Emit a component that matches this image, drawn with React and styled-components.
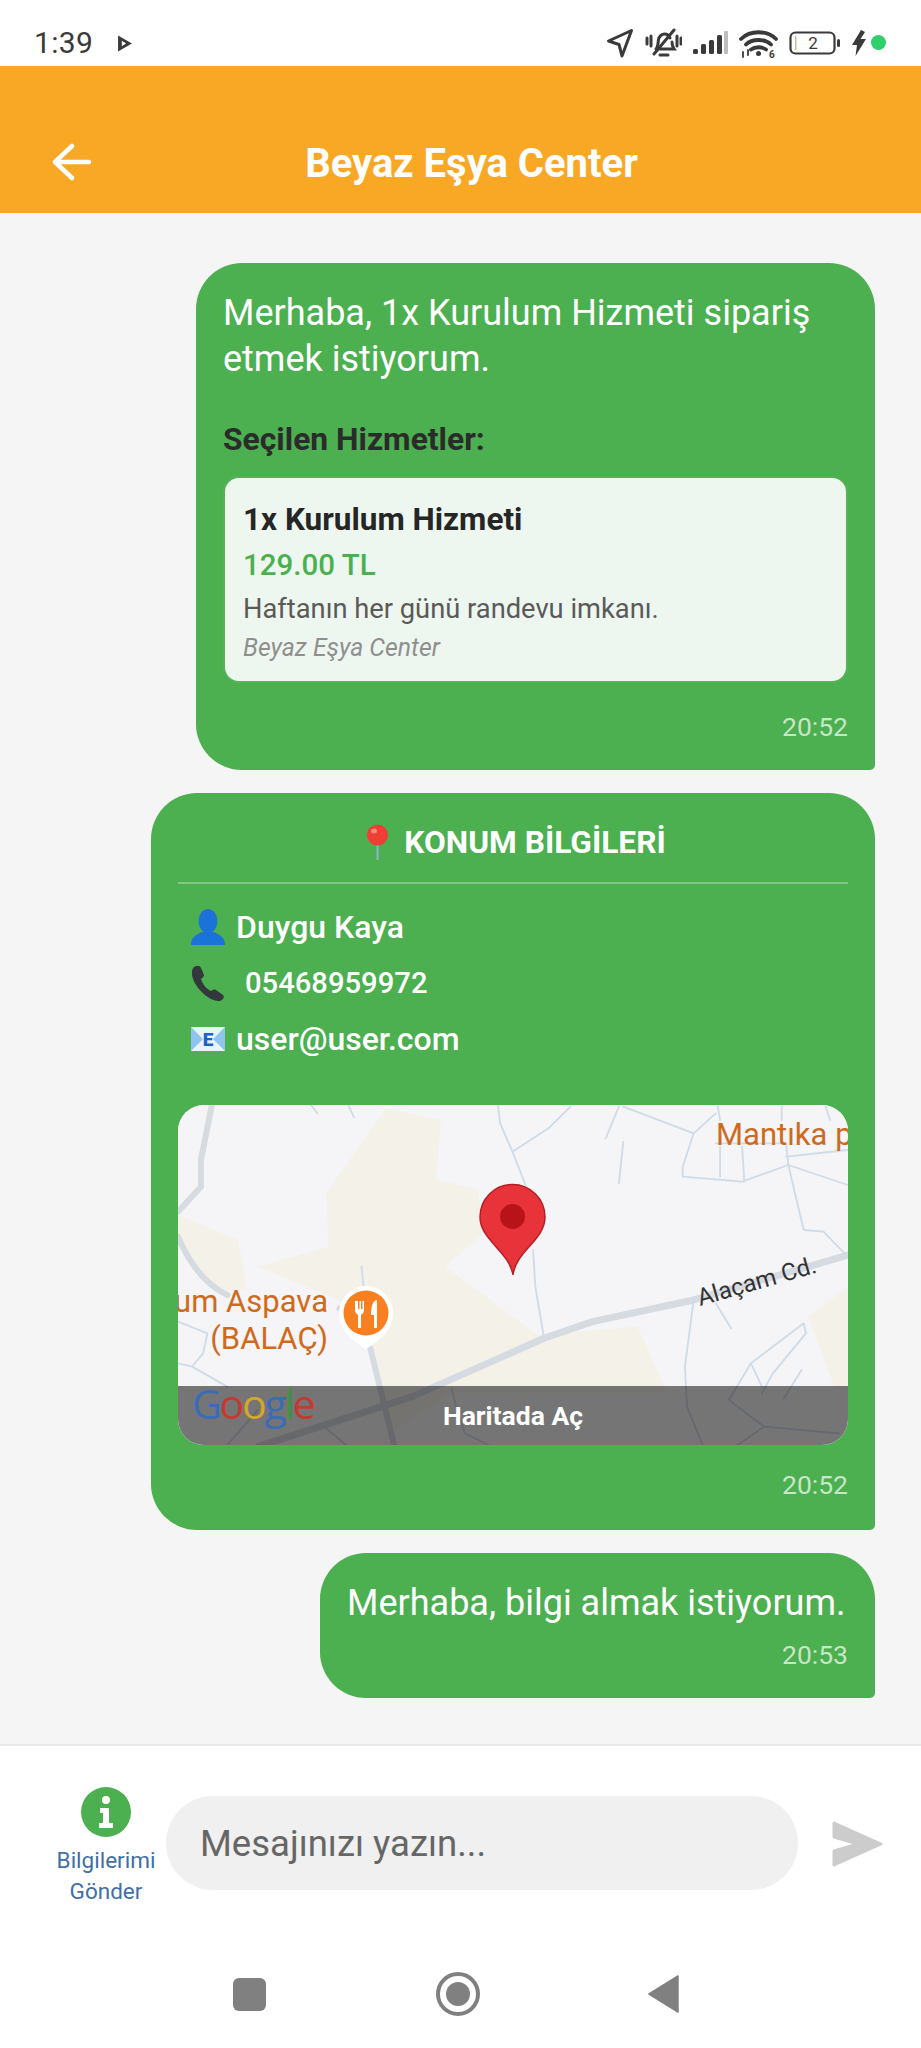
import React from 'react';
import styled, { createGlobalStyle } from 'styled-components';

const Global = createGlobalStyle`
  html, body { margin: 0; padding: 0; background: #fff; }
  * { box-sizing: border-box; }
  body { font-family: Roboto, "Noto Sans", sans-serif; }
`;

const Page = styled.div`
  width: 921px; height: 2048px; display: flex; flex-direction: column; overflow: hidden; background: #fff;
`;
const StatusBar = styled.div`
  height: 66px; flex: none; display: flex; align-items: center; padding: 0 35px 0 34px; background: #fff; color: #333;
`;
const Clock = styled.span`
  font-size: 30px; letter-spacing: 0.3px; color: #3a3a3a; margin-right: 24px; padding-top: 20px; line-height: 46px;
`;
const StatusIcons = styled.div`
  margin-left: auto; display: flex; align-items: center; gap: 11px; padding-top: 19px;
`;
const PlayGlyph = styled.svg`
  margin-top: 20px;
`;
const Header = styled.header`
  height: 147px; flex: none; background: #f9a825; position: relative; display: flex; align-items: center; justify-content: center; padding-top: 48px;
`;
const BackButton = styled.svg`
  position: absolute; left: 52px; top: 77px;
`;
const Title = styled.h1`
  margin: 0 0 0 22px; color: #fff; font-size: 40px; font-weight: 700; line-height: 48px;
`;
const Chat = styled.main`
  flex: 1; min-height: 0; background: #f5f5f5; display: flex; flex-direction: column; align-items: flex-end; gap: 23px; padding: 50px 46px 0 0;
`;
const Bubble = styled.article`
  background: #4caf50; color: #fff; border-radius: 46px 46px 5px 46px; padding: 27px 27px ${p => p.$pb || 27}px;
  width: ${p => p.$w}px;
`;
const MessageText = styled.p`
  margin: 0; font-size: 36px; line-height: 46px;
`;
const SectionLabel = styled.div`
  margin-top: 37px; color: #2b2b2b; font-size: 31.800px; font-weight: 700; line-height: 40px;
`;
const ServiceCard = styled.div`
  margin-top: 17px; height: 207px; background: #eef7ef; border: 2px solid #55b259; border-radius: 16px; padding: 22px 18px 0;
`;
const ServiceName = styled.div`
  color: #262626; font-size: 31.500px; font-weight: 700; line-height: 40px;
`;
const ServicePrice = styled.div`
  margin-top: 5px; color: #4caf50; font-size: 29.500px; font-weight: 500; line-height: 40px;
`;
const ServiceDesc = styled.div`
  margin-top: 4px; color: #5a5a5a; font-size: 27.300px; line-height: 40px;
`;
const ServiceVendor = styled.div`
  margin-top: 1px; color: #8f8f8f; font-size: 24.800px; font-style: italic; line-height: 36px;
`;
const Time = styled.time`
  display: block; text-align: right; color: rgba(255,255,255,.7); font-size: 26.500px; line-height: 32px; margin-top: ${p => p.$mt || 0}px;
`;
const LocationHead = styled.div`
  display: flex; align-items: center; justify-content: center; gap: 15px; height: 68px; margin-top: -4px; padding: 0 0 14px 6px;
  border-bottom: 2px solid rgba(255,255,255,.3); font-size: 31.700px; font-weight: 700;
`;
const InfoRows = styled.div`
  display: flex; flex-direction: column; gap: 14px; padding: 22px 0 0 13px;
`;
const InfoRow = styled.div`
  display: flex; align-items: center; height: 42px; font-size: ${p => p.$size || 32}px; font-weight: 500; gap: ${p => p.$gap || 11}px;
`;
const MapCard = styled.div`
  position: relative; margin-top: 45px; height: 340px; border-radius: 26px; overflow: hidden; background: #f5f4f6;
`;
const MapArt = styled.svg`
  display: block;
`;
const MapOverlay = styled.div`
  position: absolute; left: 0; right: 0; bottom: 0; height: 59px; background: rgba(0,0,0,.52); color: #fff;
  display: flex; align-items: center; justify-content: center; font-size: 26.500px; font-weight: 700;
`;
const GoogleMark = styled.span`
  position: absolute; left: 14px; bottom: 19px; font-family: "Open Sans", sans-serif; font-size: 41px; line-height: 46px; letter-spacing: -2.200px;
`;
const GoogleLetter = styled.span`
  color: ${p => p.$c};
`;
const Composer = styled.div`
  flex: none; height: 206px; border-top: 2px solid #e8e8e8; background: #fff; display: flex; align-items: flex-start; padding-top: 41px;
`;
const SideCol = styled.div`
  width: 166px; flex: none; display: flex; flex-direction: column; align-items: center; padding-left: 46px;
`;
const InfoDot = styled.svg`
  flex: none;
`;
const SendInfoLabel = styled.div`
  margin-top: 8px; text-align: center; color: #3f6fa8; font-size: 22.500px; line-height: 31px; white-space: nowrap;
`;
const MessageInput = styled.div`
  flex: none; width: 632px; height: 94px; margin-top: 9px; border-radius: 47px; background: #f0f0f0; color: #666; font-size: 36.500px; display: flex; align-items: center; padding: 0 0 0 34px;
`;
const SendIcon = styled.svg`
  margin: 34px 0 0 34px; flex: none;
`;
const NavBar = styled.nav`
  flex: none; height: 98px; display: flex; align-items: center; padding: 0 0 10px 233px; background: #fff;
`;
const NavSquare = styled.div`
  width: 33px; height: 33px; border-radius: 6px; background: #808080;
`;
const NavHome = styled.svg`
  margin-left: 170px;
`;
const NavBack = styled.svg`
  margin-left: 168px;
`;

const Arrow = () => (
  <svg width="28" height="30" viewBox="0 0 28 30"><path d="M25.500 2.500 2.500 13 13 16.500 16 28z" fill="none" stroke="#3a3a3a" strokeWidth="3" strokeLinejoin="round" /></svg>
);
const MutedBell = () => (
  <svg width="37" height="30" viewBox="0 0 37 30" fill="none" stroke="#3a3a3a" strokeWidth="3" strokeLinecap="round">
    <path d="M11 21c2-2 2-5 2.400-9 .5-4 4-6 6-6 3 0 5 2 5.600 4M27 14c0 4 .5 5 2 7H15" />
    <path d="M29 2 9 26M15 27h8M2 10v6M6 8v10M32 8v10M36 10v6" />
  </svg>
);
const Signal = () => (
  <svg width="35" height="24" viewBox="0 0 35 24">
    <rect x="0" y="18" width="5" height="5" rx="1.500" fill="#3a3a3a" />
    <rect x="8" y="13" width="5" height="10" rx="1.500" fill="#3a3a3a" />
    <rect x="16" y="9" width="5" height="14" rx="1.500" fill="#3a3a3a" />
    <rect x="24" y="4" width="5" height="19" rx="1.500" fill="#3a3a3a" />
    <rect x="31" y="0" width="4" height="23" rx="1" fill="#bdbdbd" />
  </svg>
);
const Wifi = () => (
  <svg width="39" height="30" viewBox="0 0 39 30" fill="none" stroke="#3a3a3a" strokeWidth="3.800" strokeLinecap="round">
    <path d="M2 11c9-9 26-9 35 0M7 16.500c6-6 19-6 25 0M12 21.500c4-3 11-3 15 0" />
    <circle cx="19.500" cy="25.500" r="2.500" fill="#3a3a3a" stroke="none" />
    <path d="M4 24v5M9 22v5" strokeWidth="1.800" />
    <text x="30" y="30" fontFamily="Roboto" fontSize="10" fontWeight="700" fill="#3a3a3a" stroke="none">6</text>
  </svg>
);
const Battery = () => (
  <svg width="52" height="24" viewBox="0 0 52 24">
    <rect x="1.500" y="1.500" width="44" height="21" rx="5" fill="none" stroke="#3a3a3a" strokeWidth="2.200" />
    <rect x="6" y="5" width="1.500" height="14" fill="#a8d28a" />
    <rect x="48" y="8" width="3" height="8" rx="1.500" fill="#3a3a3a" />
    <text x="24" y="18" textAnchor="middle" fontFamily="Roboto" fontSize="17" fill="#3a3a3a">2</text>
  </svg>
);
const Bolt = () => (
  <svg width="14" height="26" viewBox="0 0 14 26"><path d="M9 0 0 15h5l-1.500 11L14 9H8.500L13 2z" fill="#3a3a3a" /></svg>
);
const GreenDot = () => (
  <svg width="15" height="15" viewBox="0 0 15 15" style={{ marginLeft: -6 }}><circle cx="7.500" cy="7.500" r="7.500" fill="#2fcf6b" /></svg>
);
const PinEmoji = () => (
  <svg width="23" height="36" viewBox="0 0 23 36">
    <rect x="10.500" y="18" width="2" height="18" fill="#8db4c4" />
    <circle cx="11.500" cy="11" r="10.500" fill="#ef3e36" />
    <ellipse cx="8" cy="7" rx="3" ry="2.500" fill="#ff8a80" />
  </svg>
);
const PersonEmoji = () => (
  <svg width="34" height="36" viewBox="0 0 34 36">
    <ellipse cx="17" cy="12" rx="9.500" ry="12" fill="#1b72d8" />
    <path d="M0 36c0-8 5-10 11-13h12c6 3 11 5 11 13z" fill="#1b72d8" />
  </svg>
);
const PhoneEmoji = () => (
  <svg width="36" height="36" viewBox="0 0 36 36">
    <path d="M2 3c3-3 7-3 8 0l3 7c0 2-2 3-3 4 1 4 5 10 10 12 2-1 3-2 5-1l7 5c2 2 0 5-3 6C16 37 -4 15 2 3z" fill="#33383d" />
  </svg>
);
const MailEmoji = () => (
  <svg width="34" height="24" viewBox="0 0 34 24">
    <rect width="34" height="24" fill="#e8f3fb" />
    <path d="M0 0 12 12 0 24M34 0 22 12 34 24" fill="#8ec5ee" />
    <text x="17" y="19" textAnchor="middle" fontFamily="Roboto" fontWeight="900" fontSize="19" fill="#1b63c7">E</text>
  </svg>
);

const road = { fill: 'none', stroke: '#d5dbe3', vectorEffect: 'non-scaling-stroke', strokeLinejoin: 'round', strokeLinecap: 'round' };
const thin = { ...road, stroke: '#cfdbe8', strokeWidth: 1.800 };
const wide = { ...road, stroke: '#d6dae1', strokeWidth: 6 };

const MapDrawing = () => (
  <MapArt width="670" height="340" viewBox="0 0 670 340">
    <rect width="670" height="340" fill="#f5f4f6" />
    <g transform="translate(-7.900 -5) scale(.44 .3333)" style={{ filter: 'blur(1.500px)' }}>
      <path fill="#f4f1e8" d="M490 25 615 60 605 240 700 268 712 398 625 500 835 705 1062 680 1130 880 640 880 500 1000 470 770 390 650 385 600 200 500 360 440 355 280z" />
      <path fill="#f4f1e8" d="M18 345 155 420 175 570 100 570 18 440zM1542 560 1450 650 1510 860 1542 860z" />
      <path {...wide} d="M95 15 70 180 70 260 18 335" />
      <path {...wide} d="M18 410C50 510 90 560 130 585" />
      <path {...wide} d="M385 625 450 680" />
      <path {...wide} d="M455 745 510 1040" />
      <path {...wide} strokeWidth="7" d="M200 1040 550 890 850 715 960 665 1190 600 1542 465" />
      <path {...thin} d="M320 15 335 40M405 15 418 52M745 15 750 70 778 155 808 255M778 155 860 85 910 20M1020 20 990 115M1030 125 1020 250" />
      <path {...thin} d="M825 450 830 560 850 715M435 500 440 565M18 665 85 700 75 760 50 800 18 790M50 800 130 860" />
      <path {...thin} d="M1030 20 1190 100 1240 40M1190 100 1165 200 1165 230 1300 245 1405 195 1400 130 1240 130M1250 140 1250 230M1300 140 1305 245M1400 170 1540 150M1405 195 1440 390 1485 395 1540 470M1405 195 1540 255M1245 20 1250 60M1390 20 1390 60M1490 20 1500 60" />
      <path {...thin} d="M1190 600 1170 800 1175 920 1210 1035M1240 610 1275 685M1440 670 1320 790 1345 860M1440 670 1445 700 1370 820 1345 880M1320 790 1270 900 1350 980 1290 1035M1435 810 1395 895M1350 980 1520 1000" />
      <path {...thin} d="M640 865 650 920 670 1000 730 1040M130 1035 200 930M350 980 400 1035" />
    </g>
    <g fontFamily="Roboto" fill="#cf6a1d" fontSize="31">
      <text x="150" y="207" textAnchor="end">um Aspava</text>
      <text x="150" y="244" textAnchor="end">(BALAÇ)</text>
      <text x="538" y="40">Mantıka p</text>
    </g>
    <text x="522" y="201" transform="rotate(-16 522 201)" fontFamily="Roboto" fontSize="24" fill="#333">Alaçam Cd.</text>
    <path d="M188 245c-6-7-27-14-27-37a27 27 0 0 1 54 0c0 23-21 30-27 37z" fill="#fff" />
    <circle cx="188" cy="208" r="22.500" fill="#f88021" />
    <path d="M177 196v9c0 3 2 4 3 5v13h3v-13c1-1 3-2 3-5v-9h-1.500v8h-1.500v-8h-1.500v8h-1.500v-8zM198 195c-4 2-5 9-5 15h3v13h3v-28z" fill="#fff" />
    <path d="M335 170c-4-24-33-35-33-58a32.500 32.500 0 0 1 65 0c0 23-29 34-32 58z" fill="#e8333a" stroke="#b51f24" strokeWidth="1.500" />
    <circle cx="334.500" cy="111.500" r="12.500" fill="#b81318" />
  </MapArt>
);

export default function App() {
  return (
    <Page>
      <Global />
      <StatusBar>
        <Clock>1:39</Clock>
        <PlayGlyph width="16" height="19" viewBox="0 0 15 17"><path d="M1 1 14 8.500 1 16zM4.500 6v5l4-2.500z" fill="#3a3a3a" fillRule="evenodd" /></PlayGlyph>
        <StatusIcons>
          <Arrow /><MutedBell /><Signal /><Wifi /><Battery /><Bolt /><GreenDot />
        </StatusIcons>
      </StatusBar>
      <Header>
        <BackButton width="40" height="38" viewBox="0 0 40 38" fill="none" stroke="#fff" strokeWidth="4.500" strokeLinecap="round" strokeLinejoin="round">
          <path d="M20 3 3 19l17 16M3 19h34" />
        </BackButton>
        <Title>Beyaz Eşya Center</Title>
      </Header>
      <Chat>
        <Bubble $w={679}>
          <MessageText>Merhaba, 1x Kurulum Hizmeti sipariş etmek istiyorum.</MessageText>
          <SectionLabel>Seçilen Hizmetler:</SectionLabel>
          <ServiceCard>
            <ServiceName>1x Kurulum Hizmeti</ServiceName>
            <ServicePrice>129.00 TL</ServicePrice>
            <ServiceDesc>Haftanın her günü randevu imkanı.</ServiceDesc>
            <ServiceVendor>Beyaz Eşya Center</ServiceVendor>
          </ServiceCard>
          <Time $mt={28}>20:52</Time>
        </Bubble>
        <Bubble $w={724} $pb={29}>
          <LocationHead><PinEmoji />KONUM BİLGİLERİ</LocationHead>
          <InfoRows>
            <InfoRow><PersonEmoji />Duygu Kaya</InfoRow>
            <InfoRow $gap={18} $size={29.200}><PhoneEmoji />05468959972</InfoRow>
            <InfoRow><MailEmoji />user@user.com</InfoRow>
          </InfoRows>
          <MapCard>
            <MapDrawing />
            <MapOverlay>Haritada Aç</MapOverlay>
            <GoogleMark>
              <GoogleLetter $c="#3a6cb8">G</GoogleLetter><GoogleLetter $c="#c5392e">o</GoogleLetter><GoogleLetter $c="#d8a52b">o</GoogleLetter><GoogleLetter $c="#3a6cb8">g</GoogleLetter><GoogleLetter $c="#3f9145">l</GoogleLetter><GoogleLetter $c="#c5392e">e</GoogleLetter>
            </GoogleMark>
          </MapCard>
          <Time $mt={24}>20:52</Time>
        </Bubble>
        <Bubble $w={555}>
          <MessageText>Merhaba, bilgi almak istiyorum.</MessageText>
          <Time $mt={13}>20:53</Time>
        </Bubble>
      </Chat>
      <Composer>
        <SideCol>
          <InfoDot width="50" height="50" viewBox="0 0 50 50">
            <circle cx="25" cy="25" r="25" fill="#4caf50" />
            <circle cx="25" cy="13" r="4" fill="#fff" />
            <path d="M19 21h9v15h4v5H18v-5h4V26h-3z" fill="#fff" />
          </InfoDot>
          <SendInfoLabel>Bilgilerimi<br />Gönder</SendInfoLabel>
        </SideCol>
        <MessageInput>Mesajınızı yazın...</MessageInput>
        <SendIcon width="51" height="46" viewBox="0 0 51 46"><path d="M2 2 49 23 2 44V30l24-7L2 16z" fill="#cccccc" stroke="#cccccc" strokeWidth="3" strokeLinejoin="round" /></SendIcon>
      </Composer>
      <NavBar>
        <NavSquare />
        <NavHome width="44" height="44" viewBox="0 0 44 44"><circle cx="22" cy="22" r="20" fill="none" stroke="#808080" strokeWidth="4" /><circle cx="22" cy="22" r="12" fill="#808080" /></NavHome>
        <NavBack width="31" height="38" viewBox="0 0 31 38"><path d="M30 1v36L1 19z" fill="#808080" stroke="#808080" strokeWidth="1.500" strokeLinejoin="round" /></NavBack>
      </NavBar>
    </Page>
  );
}
